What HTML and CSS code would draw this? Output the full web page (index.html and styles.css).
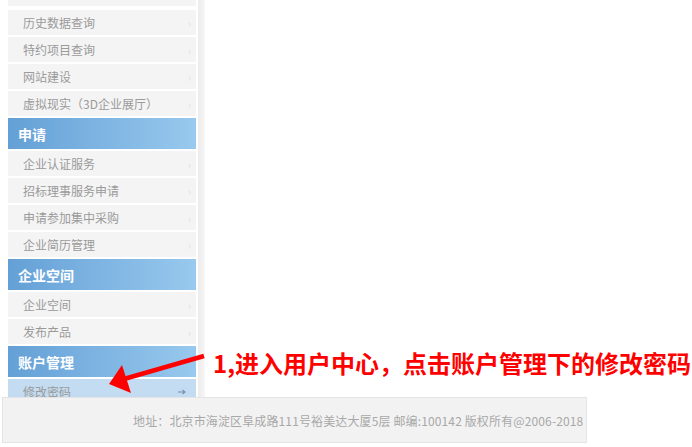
FILE: index.html
```html
<!DOCTYPE html>
<html lang="zh">
<head>
<meta charset="utf-8">
<title>用户中心</title>
<link rel="stylesheet" href="styles.css">
</head>
<body>
<div class="page">
  <div class="main">
    <div class="sidebar">
      <div class="stub"></div>
      <div class="item"><span>历史数据查询</span><span class="chev">›</span></div>
      <div class="item"><span>特约项目查询</span><span class="chev">›</span></div>
      <div class="item"><span>网站建设</span><span class="chev">›</span></div>
      <div class="item"><span>虚拟现实（3D企业展厅）</span><span class="chev">›</span></div>
      <div class="head">申请</div>
      <div class="item"><span>企业认证服务</span><span class="chev">›</span></div>
      <div class="item"><span>招标理事服务申请</span><span class="chev">›</span></div>
      <div class="item"><span>申请参加集中采购</span><span class="chev">›</span></div>
      <div class="item"><span>企业简历管理</span><span class="chev">›</span></div>
      <div class="head">企业空间</div>
      <div class="item"><span>企业空间</span><span class="chev">›</span></div>
      <div class="item"><span>发布产品</span><span class="chev">›</span></div>
      <div class="head">账户管理</div>
      <div class="item active"><span>修改密码</span>
        <svg class="go" width="8" height="6" viewBox="0 0 8 6"><path d="M0 3H7M4.5 0.8L7 3L4.5 5.2" fill="none" stroke="#6f8fb3" stroke-width="1.1"/></svg>
      </div>
    </div>
    <div class="band"></div>
  </div>
  <div class="footer">地址：北京市海淀区阜成路111号裕美达大厦5层 邮编:100142 版权所有@2006-2018</div>
</div>
<svg class="annot-arrow" width="692" height="447" viewBox="0 0 692 447">
  <line x1="204" y1="356" x2="124" y2="379" stroke="#ff0000" stroke-width="4.5"/>
  <polygon points="109,384 122,365 131,393" fill="#ff0000"/>
</svg>
<div class="annot-text">1,进入用户中心，点击账户管理下的修改密码</div>
</body>
</html>
```
FILE: styles.css
```css
html, body {
  margin: 0;
  padding: 0;
  background: #ffffff;
}
body {
  font-family: "Noto Sans CJK SC", "Noto Sans", "Liberation Sans", sans-serif;
  width: 692px;
  height: 447px;
  overflow: hidden;
  position: relative;
}
.page {
  display: flex;
  flex-direction: column;
}
.main {
  height: 397px;
  overflow: hidden;
  display: flex;
  padding-left: 8px;
  gap: 2px;
}
.sidebar {
  width: 188px;
  flex: none;
}
.stub {
  height: 6px;
  background: #f4f4f4;
  margin-bottom: 4px;
}
.item {
  height: 25px;
  margin-bottom: 2px;
  background: #f4f4f4;
  display: flex;
  align-items: center;
  justify-content: space-between;
  padding: 0 5px 0 15px;
  font-size: 12px;
  color: #9a9a9a;
  box-sizing: border-box;
  white-space: nowrap;
}
.item .chev {
  color: #e2e2e2;
  font-size: 11px;
}
.item.active {
  background: #c3dcf1;
  padding-right: 10px;
}
.head {
  height: 31px;
  margin-bottom: 2px;
  background: linear-gradient(to right, #64a0d6, #98c9ee);
  color: #ffffff;
  font-weight: bold;
  font-size: 14px;
  display: flex;
  align-items: center;
  padding-left: 10px;
}
.band {
  width: 7px;
  flex: none;
  background: linear-gradient(to right, #ececec, #f7f7f7);
}
.footer {
  margin-left: 2px;
  width: 585px;
  height: 46px;
  box-sizing: border-box;
  border: 1px solid #e4e4e4;
  background: #f2f2f2;
  display: flex;
  align-items: center;
  padding-left: 130px;
  font-size: 12px;
  letter-spacing: 0.13px;
  color: #a8a8a8;
  white-space: nowrap;
  overflow: hidden;
}
.annot-arrow {
  position: absolute;
  left: 0;
  top: 0;
  pointer-events: none;
}
.annot-text {
  position: absolute;
  left: 213px;
  top: 348px;
  line-height: 30px;
  font-size: 24px;
  font-weight: bold;
  color: #ff0000;
  white-space: nowrap;
}
```
